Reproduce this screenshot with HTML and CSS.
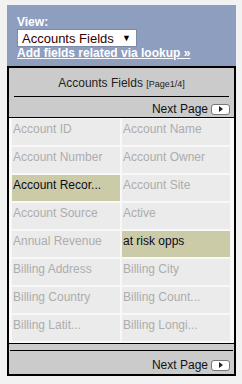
FILE: index.html
```html
<!DOCTYPE html>
<html>
<head>
<meta charset="utf-8" />
<title>Fields</title>
<link rel="stylesheet" href="styles.css">
</head>
<body>
<div class="wrap">
    <div class="view">
        <div class="label">View:</div>
        <div class="picker"><span>Accounts Fields</span><span class="arrow">&#9660;</span></div>
        <a class="lookup" href="#">Add fields related via lookup &raquo;</a>
    </div>
    <div class="fields">
        <div class="title">Accounts Fields <span class="page">[Page1/4]</span></div>
        <div class="nav"><span>Next Page</span><span class="next"><i></i></span></div>
        <div class="grid">
            <div class="cell">Account ID</div>
            <div class="cell">Account Name</div>
            <div class="cell">Account Number</div>
            <div class="cell">Account Owner</div>
            <div class="cell on">Account Recor...</div>
            <div class="cell">Account Site</div>
            <div class="cell">Account Source</div>
            <div class="cell">Active</div>
            <div class="cell">Annual Revenue</div>
            <div class="cell on">at risk opps</div>
            <div class="cell">Billing Address</div>
            <div class="cell">Billing City</div>
            <div class="cell">Billing Country</div>
            <div class="cell">Billing Count...</div>
            <div class="cell">Billing Latit...</div>
            <div class="cell">Billing Longi...</div>
        </div>
        <div class="foot">
            <div class="rule"></div>
            <div class="nav bottom"><span>Next Page</span><span class="next"><i></i></span></div>
        </div>
    </div>
</div>
</body>
</html>
```

FILE: styles.css
```css
*{
	margin:0;
	padding:0;
	box-sizing:border-box;
}
body{
	background:#f2f2f2;
	font-family:"Liberation Sans", Arial, sans-serif;
}
.wrap{
	width:229px;
	margin:5px 0 0 7px;
}
.view{
	background:#8d9ebf;
	padding:10px 0 6px 10px;
	color:#fff;
}
.label{
	font-weight:bold;
	font-size:12px;
	line-height:14px;
}
.picker{
	width:120px;
	height:18px;
	background:#fff;
	border:1px solid #7d8aa6;
	display:flex;
	align-items:center;
	justify-content:space-between;
	padding:0 5px 0 4px;
	font-size:13px;
	color:#300;
}
.picker .arrow{
	font-size:9px;
	color:#000;
}
.lookup{
	display:block;
	color:#fff;
	font-weight:bold;
	font-size:12px;
	line-height:13px;
	text-decoration:underline;
}
.fields{
	border:2px solid #000;
	background:#cbcbcb;
}
.title{
	text-align:center;
	font-size:12px;
	color:#222;
	height:29px;
	line-height:30px;
	margin:0 5px;
	border-bottom:1px solid #000;
}
.title .page{
	font-size:9px;
}
.nav{
	display:flex;
	justify-content:flex-end;
	align-items:center;
	gap:3px;
	height:21px;
	padding:4px 4px 0 0;
	font-size:12px;
	color:#111;
	border-bottom:1px solid #000;
}
.foot{
	padding-top:6px;
}
.rule{
	height:1px;
	background:#000;
	margin:0 1px;
}
.nav.bottom{
	border-bottom:0;
	height:23px;
	padding-top:5px;
}
.next{
	width:19px;
	height:11px;
	background:#fff;
	border:1px solid #777;
	border-radius:3px;
	display:flex;
	align-items:center;
	justify-content:center;
}
.next i{
	width:0;
	height:0;
	border-left:4px solid #222;
	border-top:3px solid transparent;
	border-bottom:3px solid transparent;
}
.grid{
	background:#f8f8f8;
	display:grid;
	grid-template-columns:108px 108px;
	grid-auto-rows:26px;
	gap:2px;
	padding:1px 3px 2px 3px;
	border-bottom:1px solid #000;
}
.cell{
	background:#ebebeb;
	color:#adadad;
	font-size:12px;
	padding:3px 0 0 1px;
	line-height:14px;
	white-space:nowrap;
	overflow:hidden;
}
.cell.on{
	background:#cccba8;
	color:#0a0a20;
}
```
